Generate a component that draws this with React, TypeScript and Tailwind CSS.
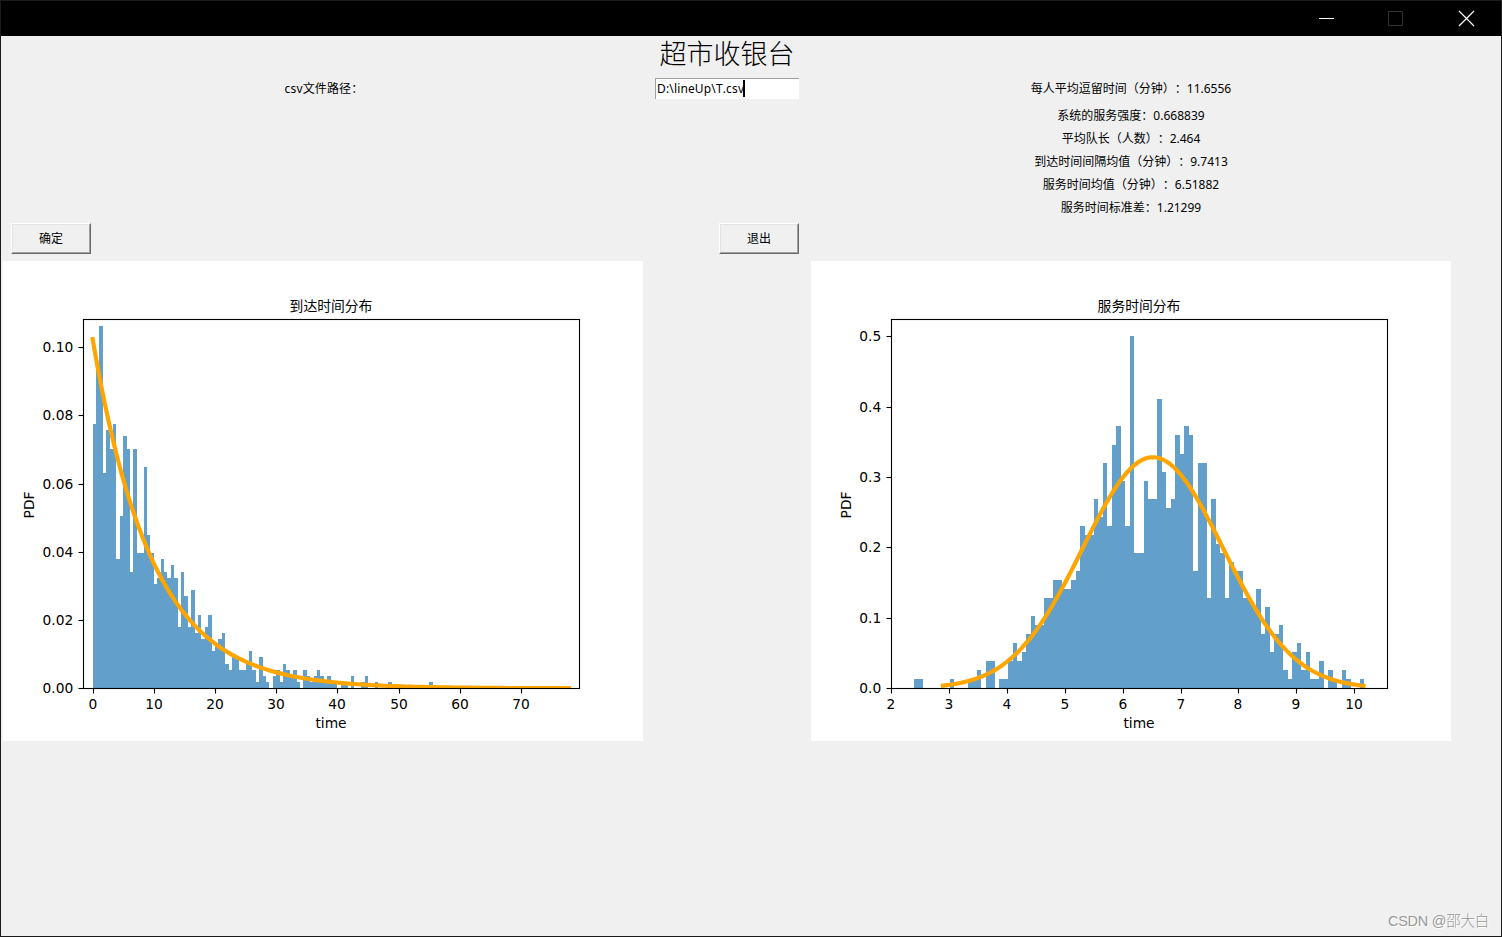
import React from "react";

type Step = [number, number];

// Histogram outlines: [left edge, top edge] in figure pixels, each running to the next entry.
const arrivalSteps: Step[] = [
  [90, 163], [93, 107], [96, 65], [100, 212], [103, 169], [107, 188], [110, 163], [113, 298], [117, 255],
  [120, 175], [124, 188], [127, 311], [130, 188], [134, 292], [141, 206], [144, 274], [147, 292], [151, 323],
  [154, 317], [158, 298], [161, 311], [164, 317], [168, 304], [171, 317], [175, 366], [178, 311], [181, 335],
  [185, 366], [188, 329], [192, 372], [195, 354], [198, 378], [202, 366], [205, 354], [209, 390], [212, 384],
  [215, 378], [219, 372], [222, 403], [226, 409], [229, 396], [236, 409], [243, 403], [246, 390], [249, 409],
  [253, 421], [256, 396], [260, 415], [263, 421], [266, 427], [270, 415], [273, 409], [277, 421], [280, 403],
  [283, 409], [287, 415], [290, 409], [294, 421], [297, 427], [300, 409], [304, 415], [307, 421], [311, 415],
  [314, 409], [317, 415], [321, 421], [324, 415], [328, 421], [334, 427], [338, 421], [345, 427], [348, 415],
  [351, 427], [358, 421], [362, 415], [365, 427], [372, 421], [375, 427], [385, 421], [389, 427], [426, 421],
  [430, 427],
];

const serviceSteps: Step[] = [
  [103, 418], [112, 427], [139, 418], [143, 427], [157, 418], [166, 409], [170, 427], [175, 400], [184, 427],
  [188, 418], [197, 400], [202, 382], [206, 400], [211, 391], [215, 373], [220, 355], [224, 364], [233, 337],
  [242, 319], [251, 328], [260, 319], [265, 310], [269, 265], [274, 274], [283, 238], [287, 256], [292, 202],
  [296, 265], [301, 184], [305, 165], [310, 220], [314, 265], [319, 75], [323, 292], [333, 220], [337, 238],
  [346, 138], [351, 211], [355, 247], [360, 238], [364, 174], [369, 193], [373, 165], [378, 174], [382, 310],
  [387, 202], [396, 337], [400, 238], [405, 283], [409, 292], [414, 337], [418, 301], [423, 310], [432, 337],
  [441, 346], [445, 328], [450, 373], [454, 346], [459, 391], [463, 373], [468, 364], [472, 409], [477, 418],
  [481, 391], [486, 382], [490, 409], [495, 391], [499, 418], [508, 400], [513, 427], [517, 409], [522, 418],
  [526, 427], [531, 409], [535, 418], [540, 427], [549, 418], [553, 427],
];

function outline(steps: Step[]) {
  let d = `M${steps[0][0]} 427`;
  steps.forEach(([x, y]) => {
    d += `H${x}V${y}`;
  });
  return d + "Z";
}

function curve(from: number, to: number, px: (t: number) => number, py: (t: number) => number) {
  const points: string[] = [];
  for (let i = 0; i <= 160; i++) {
    const t = from + ((to - from) * i) / 160;
    points.push(`${px(t).toFixed(2)},${py(t).toFixed(2)}`);
  }
  return points.join(" ");
}

const arrivalCurve = curve(
  0,
  78,
  (t) => 89.7 + t * 6.107,
  (t) => 427.3 - (Math.exp(-t / 9.7413) / 9.7413) * 3400,
);

const serviceCurve = curve(
  2.89,
  10.16,
  (t) => 80.5 + (t - 2) * 57.85,
  (t) => 427.3 - (Math.exp(-((t - 6.51882) ** 2) / (2 * 1.21299 ** 2)) / (1.21299 * Math.sqrt(2 * Math.PI))) * 702.6,
);

interface FigureProps {
  id: string;
  title: string;
  steps: Step[];
  line: string;
  xTicks: [number, string][];
  yTicks: [number, string][];
  yLabelX: number;
}

function Figure({ id, title, steps, line, xTicks, yTicks, yLabelX }: FigureProps) {
  return (
    <svg width="640" height="480" viewBox="0 0 640 480" className="block bg-white font-['DejaVu_Sans',sans-serif] text-[13.8px]">
      <clipPath id={id}>
        <rect x="80" y="58" width="497" height="370" />
      </clipPath>
      <path d={outline(steps)} fill="#629fca" shapeRendering="crispEdges" />
      <polyline points={line} clipPath={`url(#${id})`} fill="none" stroke="#ffa500" strokeWidth="4.17" strokeLinecap="square" strokeLinejoin="round" />
      <rect x="80.5" y="58.5" width="496" height="369" fill="none" stroke="#000" strokeWidth="1.1" />
      {xTicks.map(([x, label]) => (
        <g key={label}>
          <path d={`M${x + 0.5} 428v4.5`} stroke="#000" strokeWidth="1.1" />
          <text x={x} y="448" textAnchor="middle">{label}</text>
        </g>
      ))}
      {yTicks.map(([y, label]) => (
        <g key={label}>
          <path d={`M80 ${y + 0.5}h-4.5`} stroke="#000" strokeWidth="1.1" />
          <text x="70.3" y={y + 5} textAnchor="end">{label}</text>
        </g>
      ))}
      <text x="328" y="467" textAnchor="middle">time</text>
      <text transform={`translate(${yLabelX} 244) rotate(-90)`} textAnchor="middle">PDF</text>
      <text x="328" y="50" textAnchor="middle" className="font-['Noto_Sans_CJK_SC',sans-serif] text-[13.8px]">{title}</text>
    </svg>
  );
}

function TkButton({ children }: { children: React.ReactNode }) {
  return (
    <button className="h-[31px] w-[80px] border border-t-white border-l-white border-r-[#696969] border-b-[#696969] bg-[#f0f0f0]">
      <span className="flex h-full items-center justify-center border border-t-[#e3e3e3] border-l-[#e3e3e3] border-r-[#a0a0a0] border-b-[#a0a0a0] pt-px">
        {children}
      </span>
    </button>
  );
}

const stats = [
  "系统的服务强度：0.668839",
  "平均队长（人数）：2.464",
  "到达时间间隔均值（分钟）：9.7413",
  "服务时间均值（分钟）：6.51882",
  "服务时间标准差：1.21299",
];

export default function App() {
  return (
    <div className="flex h-[937px] w-[1502px] flex-col overflow-hidden border border-[#1a1a1a] bg-[#f0f0f0] font-['Noto_Sans','Noto_Sans_CJK_SC',sans-serif] text-xs text-black [font-kerning:none] [text-spacing-trim:space-all]">
      <header className="flex h-[35px] shrink-0 items-center justify-end bg-black pr-[26px]">
        <svg className="mr-[52px]" width="17" height="17" viewBox="0 0 17 17" stroke="#fff" fill="none"><path d="M1 8.5h15" /></svg>
        <svg className="mr-[54px]" width="17" height="17" viewBox="0 0 17 17" stroke="#333" fill="none"><path d="M1.5 1.5h14v14h-14z" /></svg>
        <svg width="17" height="17" viewBox="0 0 17 17" stroke="#fff" strokeWidth="1.2" fill="none"><path d="M1 1l15 15M16 1L1 16" /></svg>
      </header>

      <main className="grid grid-cols-[640px_168px_640px] pl-[2px]">
        <h1 className="col-start-2 flex h-[38px] items-center justify-center pb-[4px] font-['Noto_Sans_CJK_SC',sans-serif] text-[27px] font-light whitespace-nowrap">超市收银台</h1>

        <div className="col-start-1 flex h-[30px] items-center justify-center pl-[2px] tracking-[0.15px]">csv文件路径：</div>
        <div className="flex h-[30px] items-center justify-center pb-[2px]">
          <div className="flex h-[21px] w-[144px] items-center border-t border-l border-[#a0a0a0] bg-white pl-px">
            <span className="tracking-[0.15px]">D:\lineUp\T.csv</span>
            <span className="-ml-px h-[17px] w-[2px] bg-black" />
          </div>
        </div>
        <div className="flex h-[30px] items-center justify-center">每人平均逗留时间（分钟）：11.6556</div>

        <div className="col-start-3 flex flex-col">
          {stats.map((s) => (
            <div key={s} className="flex h-[23px] items-center justify-center">{s}</div>
          ))}
        </div>

        <div className="col-start-1 flex h-[42px] items-start pt-[4px] pl-[8px]"><TkButton>确定</TkButton></div>
        <div className="flex h-[42px] items-start justify-end pt-[4px] pr-[12px]"><TkButton>退出</TkButton></div>

        <div className="col-start-1">
          <Figure
            id="arrival-axes"
            title="到达时间分布"
            steps={arrivalSteps}
            line={arrivalCurve}
            xTicks={[[90, "0"], [151, "10"], [212, "20"], [273, "30"], [334, "40"], [396, "50"], [457, "60"], [518, "70"]]}
            yTicks={[[427, "0.00"], [359, "0.02"], [291, "0.04"], [223, "0.06"], [154, "0.08"], [86, "0.10"]]}
            yLabelX={31}
          />
        </div>
        <div className="col-start-3">
          <Figure
            id="service-axes"
            title="服务时间分布"
            steps={serviceSteps}
            line={serviceCurve}
            xTicks={[[80, "2"], [138, "3"], [196, "4"], [254, "5"], [312, "6"], [370, "7"], [427, "8"], [485, "9"], [543, "10"]]}
            yTicks={[[427, "0.0"], [357, "0.1"], [286, "0.2"], [216, "0.3"], [146, "0.4"], [75, "0.5"]]}
            yLabelX={40}
          />
        </div>
      </main>

      <footer className="mt-auto flex justify-end pr-[12px] pb-[4px] font-['Liberation_Sans','Noto_Sans_CJK_SC',sans-serif] text-[14.5px] leading-[22px] font-light tracking-[-0.25px] text-[#999] [text-shadow:1px_1px_0_#fff]">
        CSDN @邵大白
      </footer>
    </div>
  );
}
